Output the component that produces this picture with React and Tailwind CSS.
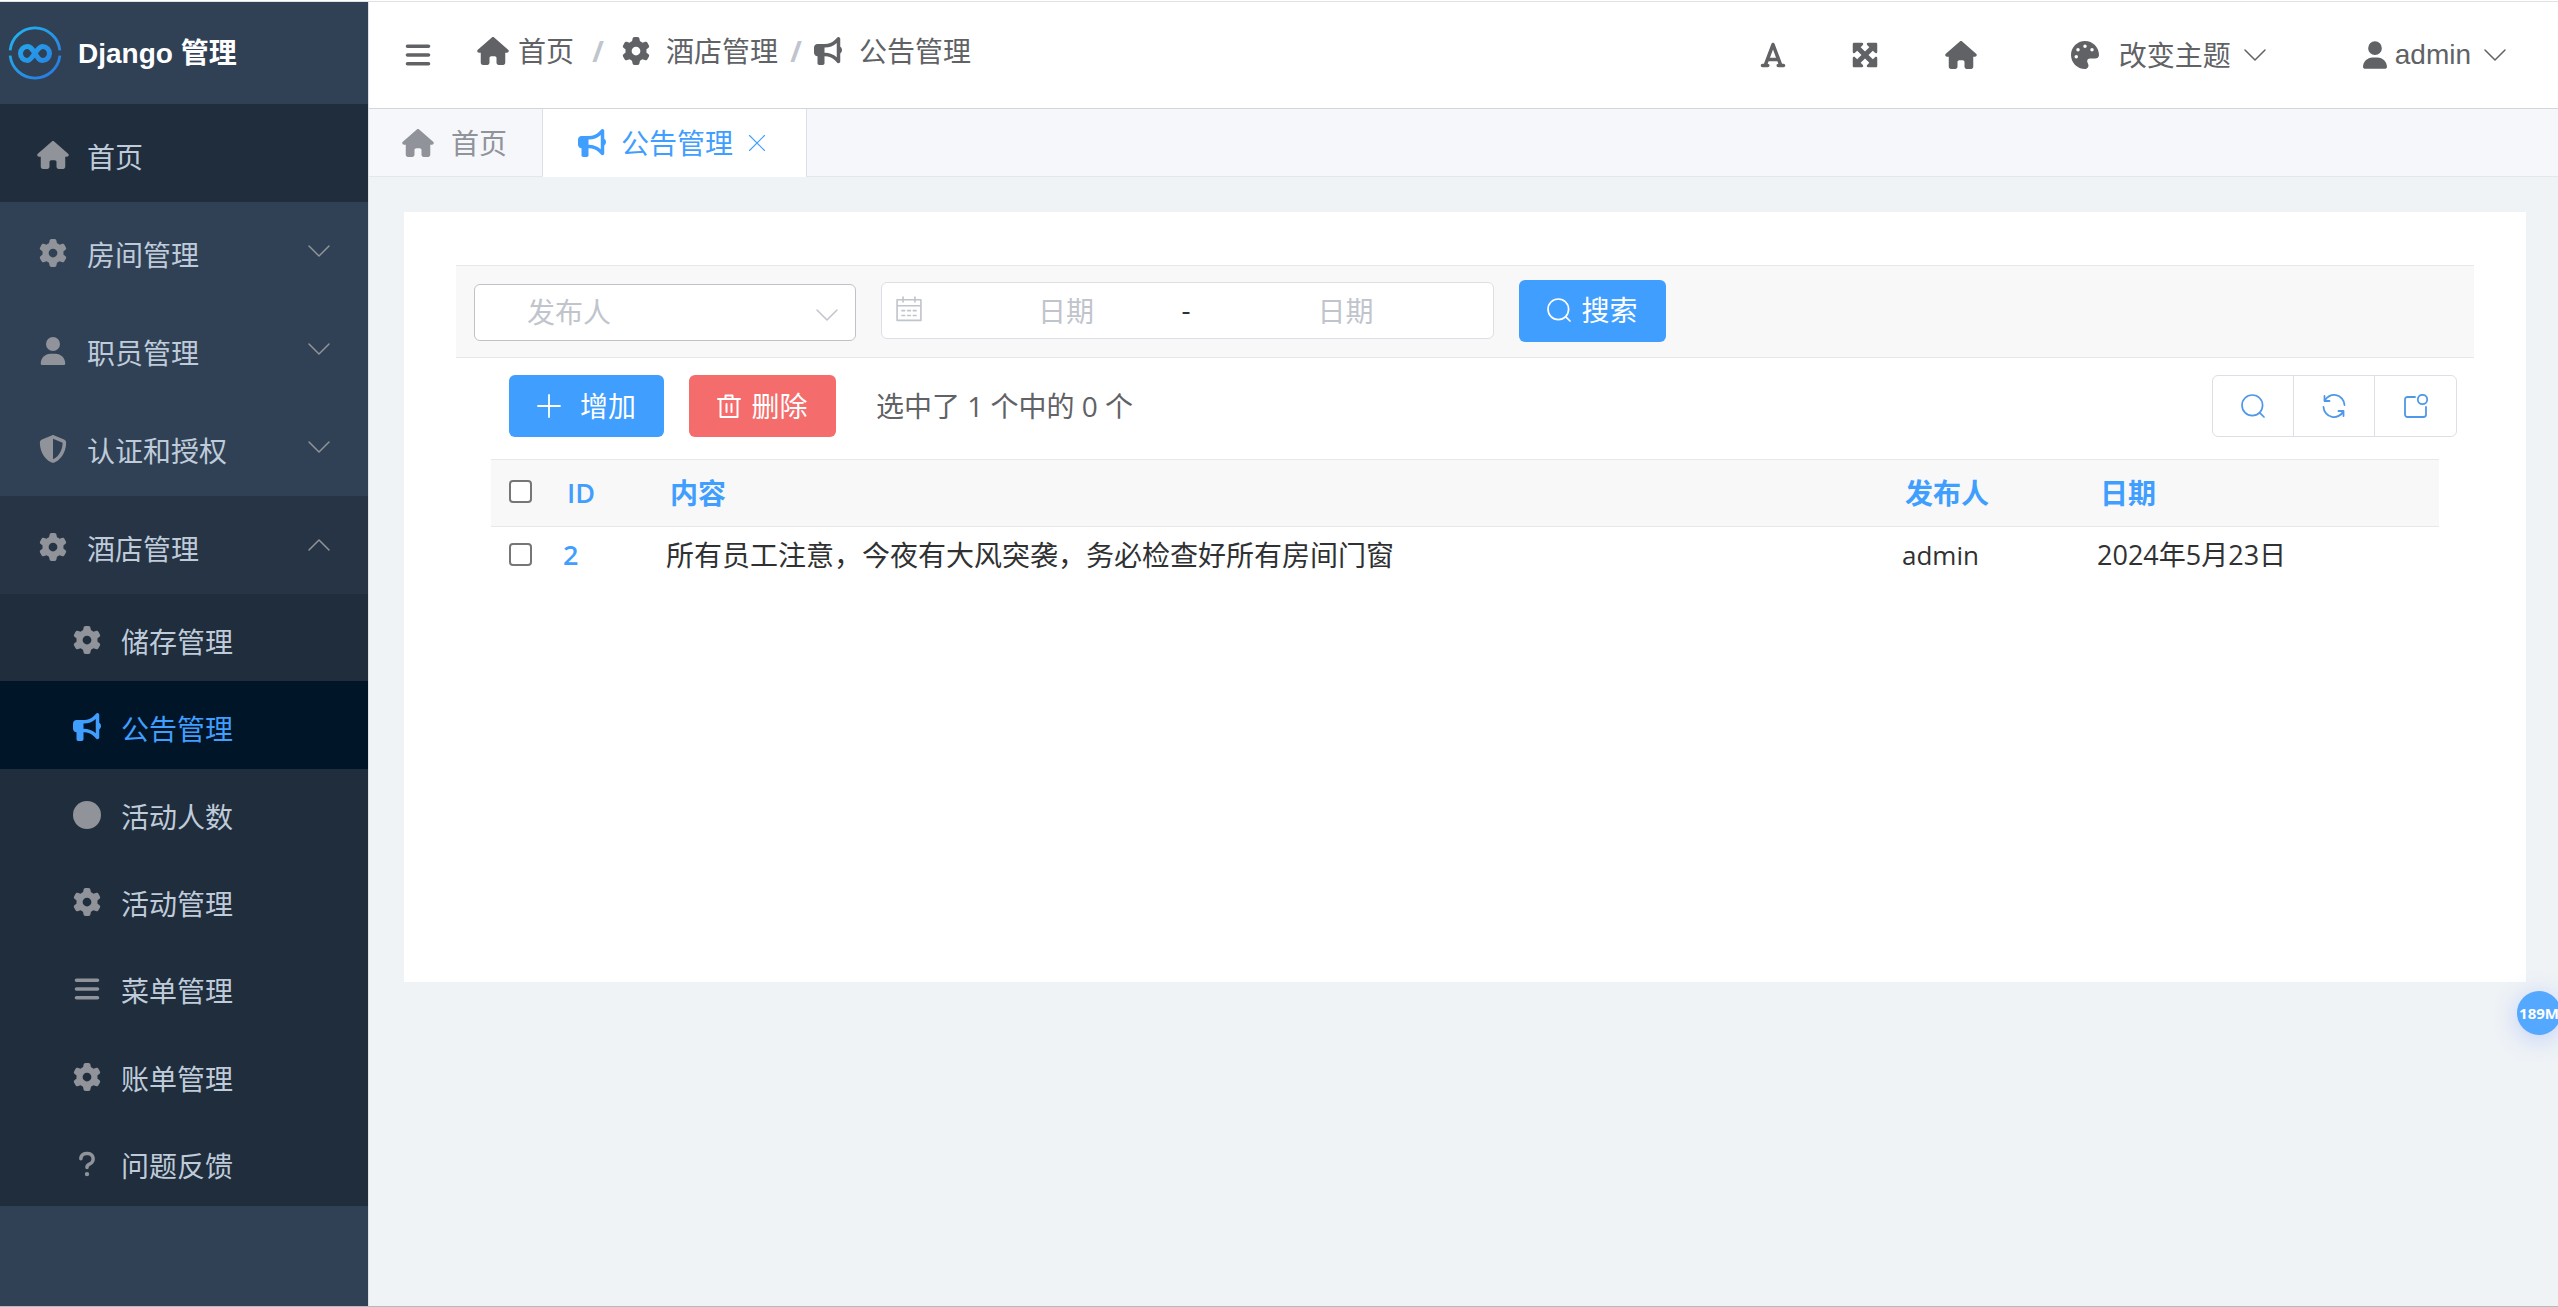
import { useState } from 'react';
import { FaBars, FaBullhorn, FaCircle, FaFont, FaGear, FaHouse, FaMaximize, FaPalette, FaQuestion, FaShieldHalved, FaUser } from 'react-icons/fa6';

const menus = [
  { name: '房间管理', icon: FaGear },
  { name: '职员管理', icon: FaUser },
  { name: '认证和授权', icon: FaShieldHalved },
  { name: '酒店管理', icon: FaGear, open: true },
];

const hotelMenus = [
  { name: '储存管理', icon: FaGear },
  { name: '公告管理', icon: FaBullhorn },
  { name: '活动人数', icon: FaCircle },
  { name: '活动管理', icon: FaGear },
  { name: '菜单管理', icon: FaBars },
  { name: '账单管理', icon: FaGear },
  { name: '问题反馈', icon: FaQuestion },
];

const notices = [
  { id: 2, content: '所有员工注意，今夜有大风突袭，务必检查好所有房间门窗', publisher: 'admin', date: '2024年5月23日' },
];

function LineIcon({ children, className, strokeWidth = 1.5 }) {
  return (
    <svg viewBox="0 0 24 24" fill="none" stroke="currentColor" strokeWidth={strokeWidth} strokeLinecap="round" strokeLinejoin="round" className={className} aria-hidden="true">
      {children}
    </svg>
  );
}

function Chevron({ up, className }) {
  return <LineIcon className={className}><path d={up ? 'M2 17L12 7L22 17' : 'M2 7L12 17L22 7'} /></LineIcon>;
}

function SearchIcon({ className, strokeWidth = 1.7 }) {
  return <LineIcon className={className} strokeWidth={strokeWidth}><circle cx="11.3" cy="11.3" r="10.3" /><path d="M18.8 18.8L23 23" /></LineIcon>;
}

function Logo() {
  return (
    <svg viewBox="0 0 54 54" fill="none" className="size-[54px]" aria-hidden="true">
      <defs>
        <linearGradient id="logo" x1="0" y1="0" x2="54" y2="54" gradientUnits="userSpaceOnUse">
          <stop stopColor="#22b8f0" />
          <stop offset="1" stopColor="#2a73e0" />
        </linearGradient>
      </defs>
      <path d="M2.140 24.300A25 25 0 0 1 51.860 24.300M2.140 29.700A25 25 0 0 0 51.860 29.700" stroke="url(#logo)" strokeWidth="2.800" />
      <path d="M27 27.500C23.500 22 22 20.500 19.500 20.500A7 7 0 0 0 19.500 34.500C25 34.500 28.500 20.500 34.500 20.500A7 7 0 0 1 34.500 34.500C32 34.500 30.500 33 27 27.500" stroke="url(#logo)" strokeWidth="5" />
    </svg>
  );
}

function Sidebar() {
  const [active, setActive] = useState('公告管理');

  return (
    <aside className="w-[368px] shrink-0 bg-[#304156] text-[#bfcbd9]">
      <div className="flex h-[102px] items-center gap-4 pl-2 text-white">
        <Logo />
        <h1 className="pt-px font-['Liberation_Sans','Noto_Sans_CJK_SC',sans-serif] font-bold">Django 管理</h1>
      </div>
      <nav>
        <a href="#home" className="flex h-[98px] items-center gap-4 bg-[#1f2d3d] pt-1 pl-[35px]">
          <FaHouse className="w-9 text-[#909399]" />
          <span className="pt-1">首页</span>
        </a>
        {menus.map(({ name, icon: Icon, open }) => (
          <button key={name} type="button" aria-expanded={!!open} className={`flex h-[98px] w-full items-center gap-4 pt-1 pr-[37px] pl-[35px] ${open ? 'bg-[#263445]' : ''}`}>
            <Icon className="w-9 text-[#909399]" />
            <span className="flex-1 pt-1 text-left">{name}</span>
            <Chevron up={open} className="mb-1 size-6 text-[#909399]" />
          </button>
        ))}
        <div className="grid min-h-[612px] auto-rows-fr bg-[#1f2d3d]">
          {hotelMenus.map(({ name, icon: Icon }) => (
            <a key={name} href="#menu" onClick={() => setActive(name)} className={`flex items-center gap-4 pt-1 pl-[69px] ${active === name ? 'bg-[#001528] text-[#409eff]' : ''}`}>
              <Icon className={`w-9 ${active === name ? '' : 'text-[#909399]'}`} />
              <span className="pt-1">{name}</span>
            </a>
          ))}
        </div>
      </nav>
    </aside>
  );
}

function Header() {
  return (
    <header className="flex h-[107px] items-center border-b border-[#d3d6d9] bg-white pr-[51px] pl-[35px] text-[#606266]">
      <button type="button" aria-label="菜单"><FaBars className="size-7" /></button>
      <nav className="ml-[45px] flex items-center pb-2">
        <a href="#home" className="flex items-center gap-[9px]"><FaHouse className="w-8" />首页</a>
        <span className="w-12 text-center font-bold text-[#c0c4cc]">/</span>
        <a href="#hotel" className="flex items-center gap-4"><FaGear className="w-7" />酒店管理</a>
        <span className="w-9 text-center font-bold text-[#c0c4cc]">/</span>
        <a href="#notice" className="flex items-center gap-[17px]"><FaBullhorn className="w-7" />公告管理</a>
      </nav>
      <div className="ml-auto flex items-center">
        <button type="button" aria-label="字体" className="mr-16"><FaFont className="w-7" /></button>
        <button type="button" aria-label="全屏" className="mr-[66px]"><FaMaximize className="w-7" /></button>
        <a href="#home" aria-label="首页" className="mr-[94px]"><FaHouse className="w-8" /></a>
        <button type="button" className="mr-24 flex items-center">
          <FaPalette className="mr-5 w-7" />
          改变主题
          <Chevron className="ml-3 size-6" />
        </button>
        <button type="button" className="flex items-center">
          <FaUser className="mr-2 w-6" />
          <span className="font-['Liberation_Sans',sans-serif]">admin</span>
          <Chevron className="ml-3 size-6" />
        </button>
      </div>
    </header>
  );
}

function Tabs() {
  return (
    <div className="flex h-[68px] border-b border-[#e4e7ed] bg-[#f5f7fa]">
      <button type="button" className="flex items-center gap-[17px] border-r border-[#dcdfe6] pt-px pr-[35px] pl-[33px] text-[#909399]">
        <FaHouse className="w-8" />首页
      </button>
      <button type="button" className="-mb-px flex items-center border-r border-[#dcdfe6] bg-white pr-10 pl-[33px] text-[#409eff]">
        <FaBullhorn className="mr-[13px] w-8" />公告管理
        <LineIcon className="ml-[15px] size-[18px]"><path d="M2 2L22 22M22 2L2 22" /></LineIcon>
      </button>
    </div>
  );
}

function FilterBar() {
  return (
    <form onSubmit={(event) => event.preventDefault()} className="flex h-[93px] items-center gap-[25px] border-y border-[#e8e8e8] bg-[#f8f8f8] pr-4 pb-[2px] pl-[18px]">
      <div className="relative mt-[3px] w-[382px]">
        <select aria-label="发布人" className="block h-[57px] w-full appearance-none rounded-md border border-[#bfc3c9] bg-white pb-px pl-[52px] text-[#c0c4cc]">
          <option>发布人</option>
        </select>
        <Chevron className="pointer-events-none absolute top-[19px] right-[17px] size-6 text-[#c0c4cc]" />
      </div>
      <div className="flex h-[57px] w-[613px] items-center rounded-md border border-[#dcdfe6] bg-white pl-[14px]">
        <LineIcon className="mb-1 size-[26px] text-[#c0c4cc]">
          <path d="M1 3.500H23V22.500H1ZM1 9H23M6.500 1V5.500M17.500 1V5.500" />
          <path d="M5.500 13.500H8M10.800 13.500H13.300M16 13.500H18.500M5.500 18H8M10.800 18H13.300M16 18H18.500" />
        </LineIcon>
        <input aria-label="开始日期" placeholder="日期" className="w-[252px] pl-9 text-center outline-none placeholder:text-[#c0c4cc]" />
        <span className="w-6 pb-1 text-center text-[#303133]">-</span>
        <input aria-label="结束日期" placeholder="日期" className="min-w-0 flex-1 text-center outline-none placeholder:text-[#c0c4cc]" />
      </div>
      <button type="submit" className="flex h-[62px] w-[147px] items-center justify-center gap-[10px] rounded-md bg-[#409eff] pb-[2px] text-white">
        <SearchIcon className="size-6" />搜索
      </button>
    </form>
  );
}

function Toolbar() {
  return (
    <div className="flex items-center pt-[17px] pr-[17px] pl-[53px]">
      <button type="button" className="flex h-[62px] w-[155px] items-center justify-center gap-[19px] rounded-md bg-[#409eff] pb-px text-white">
        <LineIcon className="size-6" strokeWidth={1.8}><path d="M12 1V23M1 12H23" /></LineIcon>增加
      </button>
      <button type="button" className="ml-[25px] flex h-[62px] w-[147px] items-center justify-center gap-[10px] rounded-md bg-[#f56c6c] pb-px text-white">
        <LineIcon className="size-6" strokeWidth={2}><path d="M1 5H23M3.500 5V23H20.500V5M8.500 5V1.500H15.500V5M9.500 10V18M14.500 10V18" /></LineIcon>
        删除
      </button>
      <span className="ml-10 text-[#606266]">选中了 1 个中的 0 个</span>
      <div className="ml-auto flex h-[62px] divide-x divide-[#dcdfe6] rounded-md border border-[#dcdfe6] text-[#4f97e8]">
        <button type="button" aria-label="搜索" className="flex w-[81px] items-center justify-center"><SearchIcon className="size-6" /></button>
        <button type="button" aria-label="刷新" className="flex w-[81px] items-center justify-center">
          <LineIcon className="size-6" strokeWidth={1.8}>
            <path d="M2.500 7A10.500 10.500 0 0 1 22.500 11M2.500 2V7H7.500" />
            <path d="M21.500 17A10.500 10.500 0 0 1 1.500 13M21.500 22V17H16.500" />
          </LineIcon>
        </button>
        <button type="button" aria-label="弹出" className="flex w-[81px] items-center justify-center">
          <LineIcon className="size-6" strokeWidth={1.8}>
            <path d="M11 3H3.500A2.500 2.500 0 0 0 1 5.500V20.500A2.500 2.500 0 0 0 3.500 23H19.500A2.500 2.500 0 0 0 22 20.500V13" />
            <circle cx="18.500" cy="5.500" r="4.700" />
          </LineIcon>
        </button>
      </div>
    </div>
  );
}

function NoticeTable() {
  const [selected, setSelected] = useState([]);
  const toggle = (id) => setSelected((current) => (current.includes(id) ? current.filter((item) => item !== id) : [...current, id]));
  const checkbox = 'block size-[23px] appearance-none rounded-[4px] border-2 border-[#767676] bg-white checked:bg-[#409eff]';

  return (
    <div className="pt-[22px] pr-[35px] pl-[35px]">
      <table className="w-full table-fixed text-left text-[#303133]">
        <thead className="border-y border-[#e8e8e8] bg-[#f8f8f8] text-[#409eff]">
          <tr className="h-[67px]">
            <th className="w-[72px] pt-5 pl-[18px] align-top"><input type="checkbox" aria-label="全选" className={checkbox} checked={selected.length === notices.length} onChange={() => setSelected(selected.length ? [] : notices.map((item) => item.id))} /></th>
            <th className="w-[103px] pl-1 text-[27px] font-semibold">ID</th>
            <th className="pl-1 font-bold">内容</th>
            <th className="w-[195px] pl-[3px] font-bold">发布人</th>
            <th className="w-[342px] pl-[3px] font-bold">日期</th>
          </tr>
        </thead>
        <tbody>
          {notices.map((notice) => (
            <tr key={notice.id} className="h-14">
              <td className="pt-4 pl-[18px] align-top"><input type="checkbox" aria-label="选择" className={checkbox} checked={selected.includes(notice.id)} onChange={() => toggle(notice.id)} /></td>
              <td className="text-[27px] font-semibold"><a href="#detail" className="text-[#409eff]">{notice.id}</a></td>
              <td>{notice.content}</td>
              <td className="text-[26px]">{notice.publisher}</td>
              <td className="text-[27px]">{notice.date}</td>
            </tr>
          ))}
        </tbody>
      </table>
    </div>
  );
}

export default function App() {
  return (
    <div className="flex min-h-screen flex-col overflow-x-hidden bg-white pt-px font-['Open_Sans','Noto_Sans_CJK_SC',sans-serif] text-[28px] leading-10">
      <div className="relative flex flex-1 border-y border-t-[#dfe1e3] border-b-[#b4bac4]">
        <Sidebar />
        <main className="min-w-0 flex-1 border-l border-[#dcdfe6] bg-[#eff3f6]">
          <Header />
          <Tabs />
          <section className="mt-[35px] mr-8 ml-[35px] min-h-[770px] bg-white px-[52px] pt-[53px]">
            <FilterBar />
            <Toolbar />
            <NoticeTable />
          </section>
        </main>
        <div className="absolute top-[989px] -right-[3px] flex size-11 items-center justify-center rounded-full bg-[#54a8ff] text-[15px] font-bold text-white shadow-[0_4px_24px_rgba(84,120,255,0.3)]">189M</div>
      </div>
    </div>
  );
}
